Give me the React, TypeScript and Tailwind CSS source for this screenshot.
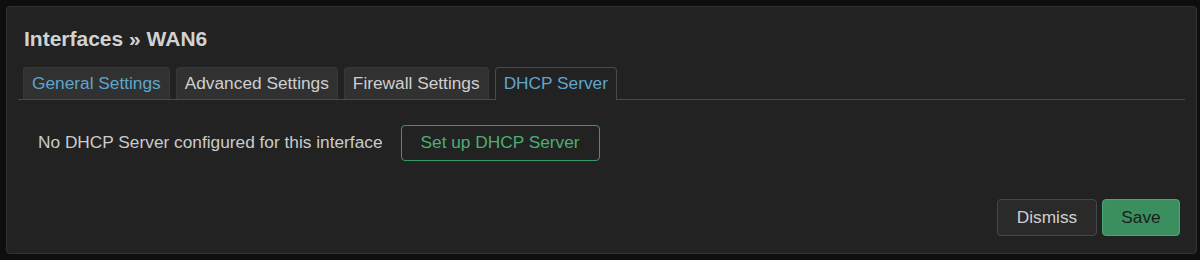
import React, { useState } from 'react';

const tabs = ['General Settings', 'Advanced Settings', 'Firewall Settings', 'DHCP Server'];

const App: React.FC = () => {
  const [active, setActive] = useState<string>('DHCP Server');

  return (
    <div className="h-[260px] w-[1200px] overflow-hidden bg-[#0e0e0e] pt-[6px] pl-[6px] font-['Liberation_Sans',Arial,sans-serif]">
      {/* Modal */}
      <div className="flex h-[248px] w-[1191px] flex-col rounded-[4px] border border-[#333] bg-[#222] px-[11px] pb-[17px] pt-[20px]">
        <h2 className="pl-[6px] text-[21px] font-bold leading-[24px] text-[#d2d2d2]">Interfaces » WAN6</h2>

        {/* Tabs */}
        <ul className="mt-[16px] flex gap-[6px] border-b border-[#4a4a4a] pl-[5px]">
          {tabs.map((tab) => {
            const isActive = tab === active;
            return (
              <li
                key={tab}
                onClick={() => setActive(tab)}
                className={
                  isActive
                    ? '-mb-px flex h-[33px] cursor-pointer items-center rounded-t-[4px] border border-b-0 border-[#4a4a4a] bg-[#222] px-[8px] text-[17.3px] text-[#5fa6cc]'
                    : 'flex h-[32px] cursor-pointer items-center rounded-t-[4px] border border-b-0 border-[#383838] bg-[#313131] px-[8px] text-[17.3px] ' +
                      (tab === 'General Settings' ? 'text-[#5fa6cc]' : 'text-[#cfcfcf]')
                }
              >
                {tab}
              </li>
            );
          })}
        </ul>

        {/* DHCP section */}
        <div className="mt-[25px] flex items-center gap-[18px] pl-[20px]">
          <span className="text-[17.3px] text-[#cbcbcb]">No DHCP Server configured for this interface</span>
          <button className="h-[36px] rounded-[4px] border border-[#3c9a64] bg-[#222] px-[19px] text-[17.3px] text-[#4cae74]">
            Set up DHCP Server
          </button>
        </div>

        {/* Footer */}
        <div className="mt-auto flex justify-end gap-[5px] pr-[5px]">
          <button className="h-[37px] w-[100px] rounded-[4px] border border-[#474747] bg-[#2a2a2a] text-[17.3px] text-[#d0d0d0]">
            Dismiss
          </button>
          <button className="h-[37px] w-[78px] rounded-[4px] border border-[#4aa673] bg-[#3b8f5f] text-[17.3px] text-[#1d1d1d]">
            Save
          </button>
        </div>
      </div>
    </div>
  );
};

export default App;
